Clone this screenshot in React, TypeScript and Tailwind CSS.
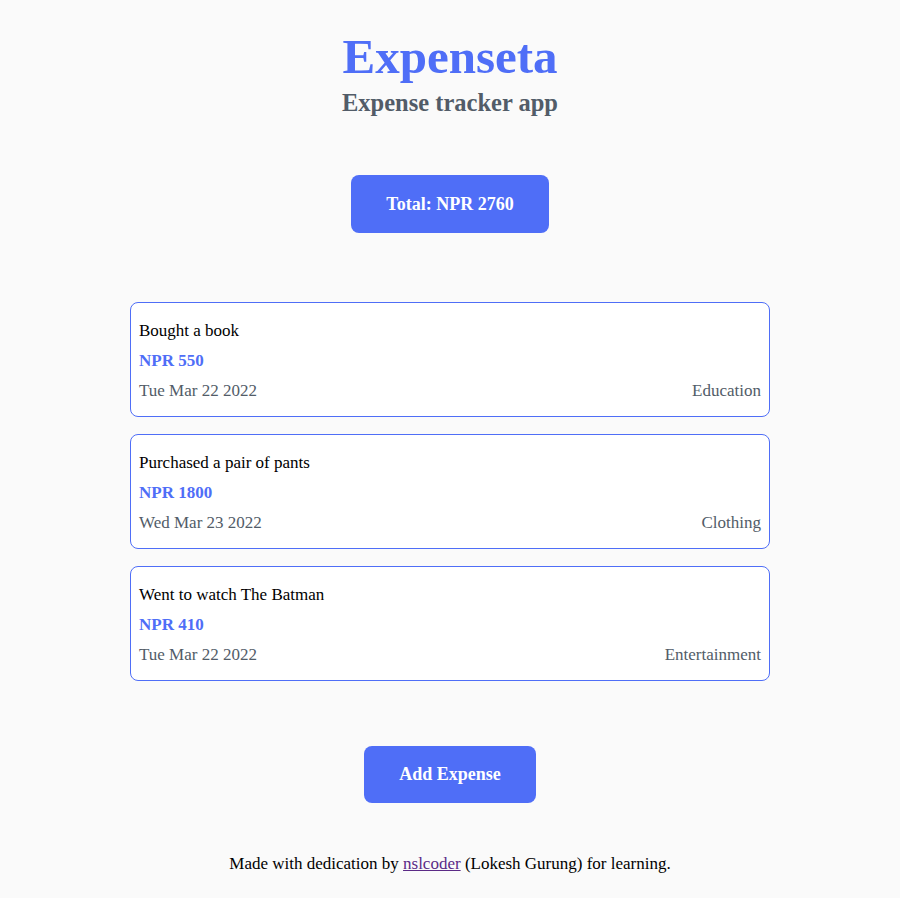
import React from "react";

const expenses = [
  { title: "Bought a book", amount: 550, date: "Tue Mar 22 2022", category: "Education" },
  { title: "Purchased a pair of pants", amount: 1800, date: "Wed Mar 23 2022", category: "Clothing" },
  { title: "Went to watch The Batman", amount: 410, date: "Tue Mar 22 2022", category: "Entertainment" },
];

export default function App() {
  return (
    <div
      className="min-h-[898px] bg-[#fafafa] flex flex-col items-center text-black"
      style={{ fontFamily: '"Liberation Serif", "Times New Roman", serif' }}
    >
      <h1 className="mt-[27px] text-[49px] leading-[60px] font-bold text-[#4f6ef7]">Expenseta</h1>
      <h2 className="mt-[0px] text-[24.5px] leading-[32px] font-bold text-[#525c68]">Expense tracker app</h2>

      <div className="mt-[56px] h-[58px] px-[35px] rounded-[8px] bg-[#4f6ef7] text-white text-[18px] font-bold flex items-center">
        Total: NPR 2760
      </div>

      <div className="mt-[69px] w-[640px] flex flex-col gap-[17px]">
        {expenses.map((e) => (
          <div
            key={e.title}
            className="bg-white border border-[#4f6ef7] rounded-[8px] px-[8px] pt-[13px] pb-[10px] text-[17px] leading-[30px]"
          >
            <div>{e.title}</div>
            <div className="font-bold text-[#4f6ef7]">NPR {e.amount}</div>
            <div className="flex justify-between text-[#525c68]">
              <span>{e.date}</span>
              <span>{e.category}</span>
            </div>
          </div>
        ))}
      </div>

      <div className="mt-[65px] h-[57px] px-[35px] rounded-[8px] bg-[#4f6ef7] text-white text-[18px] font-bold flex items-center">
        Add Expense
      </div>

      <p className="mt-[49px] text-[17px] leading-[24px]">
        Made with dedication by{" "}
        <a href="#" className="underline text-[#5b2a86]">nslcoder</a> (Lokesh Gurung) for learning.
      </p>
    </div>
  );
}
